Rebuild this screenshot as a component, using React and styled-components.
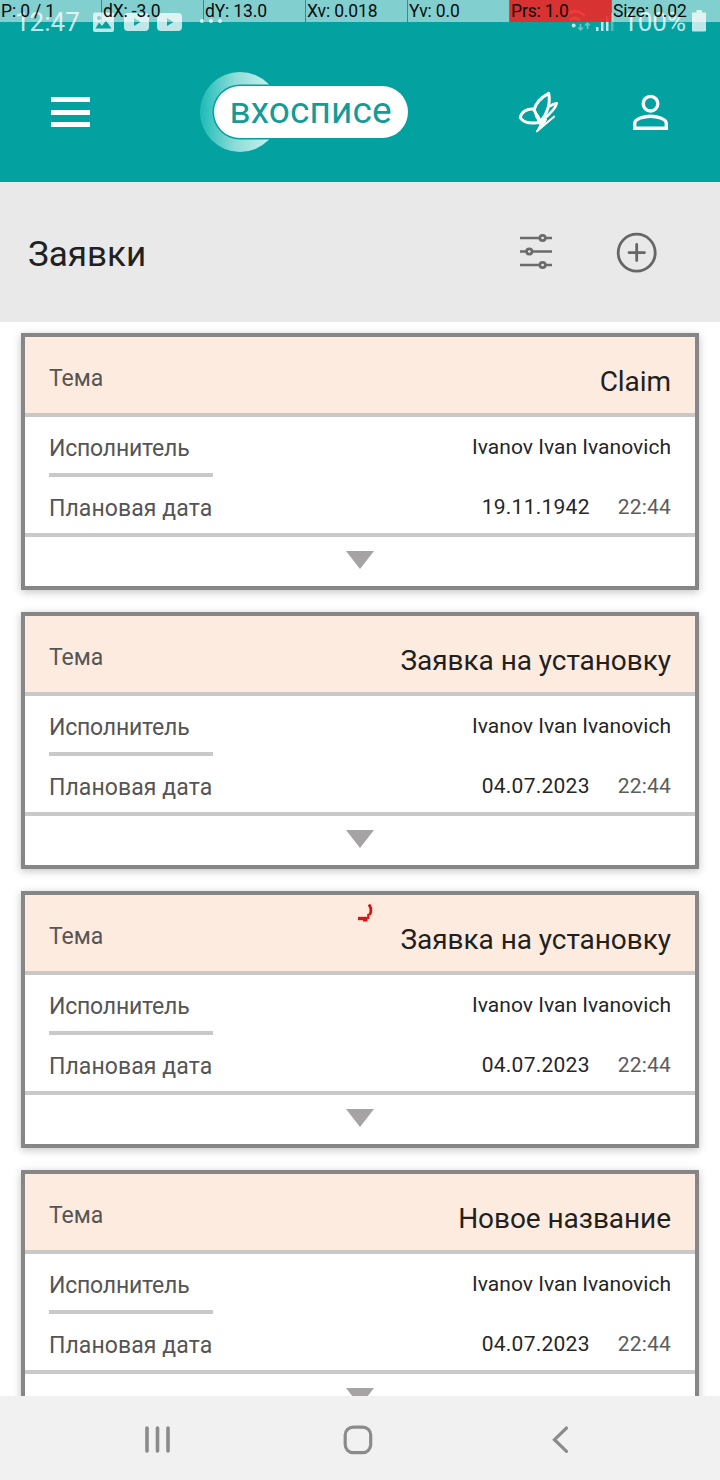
import React from 'react';
import styled, { createGlobalStyle } from 'styled-components';

const GlobalStyle = createGlobalStyle`
  *, *::before, *::after { box-sizing: border-box; }
  body { margin: 0; font-family: Roboto, "Noto Sans", sans-serif; }
  svg { display: block; flex: none; }
`;

const Screen = styled.div`
  position: relative;
  display: flex;
  flex-direction: column;
  width: 720px;
  height: 1480px;
  overflow: hidden;
  background: #fff;
`;

const Header = styled.header`
  flex: none;
  display: flex;
  flex-direction: column;
  height: 182px;
  background: #03a19f;
`;

const StatusBar = styled.div`
  display: flex;
  justify-content: space-between;
  height: 42px;
  padding: 0 13px 0 15px;
  color: rgba(255, 255, 255, 0.75);
`;

const StatusGroup = styled.div`
  display: flex;
  gap: ${(p) => p.$gap}px;
`;

const StatusText = styled.span`
  font-size: 26px;
  line-height: 44px;
  white-space: nowrap;
`;

const AppBar = styled.div`
  display: flex;
  align-items: center;
  height: 140px;
  padding: 0 50px 0 51px;
`;

const MenuButton = styled.button`
  display: flex;
  flex-direction: column;
  gap: 7.5px;
  width: 39px;
  margin-right: 109px;
  padding: 0;
  border: 0;
  background: none;
`;

const MenuLine = styled.span`
  height: 5px;
  background: #fff;
`;

const AppActions = styled.div`
  display: flex;
  align-items: center;
  justify-content: space-between;
  width: 152px;
  margin-left: auto;
`;

const TitleBar = styled.div`
  flex: none;
  display: flex;
  align-items: center;
  height: 140px;
  padding: 0 62px 0 28px;
  background: #e9e9e9;
`;

const PageTitle = styled.h1`
  margin: 5px auto 0 0;
  color: #212121;
  font-size: 35px;
  font-weight: 400;
  line-height: 40px;
`;

const TitleActions = styled.div`
  display: flex;
  align-items: center;
  gap: 63px;
`;

const CardList = styled.main`
  flex: 1;
  min-height: 0;
  display: flex;
  flex-direction: column;
  gap: 22px;
  padding: 11px 21px 0;
  overflow: hidden;
`;

const Card = styled.article`
  flex: none;
  height: 257px;
  border: 4px solid #868686;
  background: #fff;
  box-shadow: 0 2px 8px rgba(0, 0, 0, 0.24);
`;

const CardHead = styled.div`
  display: flex;
  justify-content: space-between;
  align-items: flex-start;
  height: 80px;
  padding: 28px 24px 0;
  border-bottom: 4px solid #c9c8c7;
  background: #feebe0;
`;

const CardRow = styled.div`
  display: flex;
  justify-content: space-between;
  height: 60px;
  padding: 0 24px;
  border-bottom: ${(p) => (p.$divided ? '4px solid #c9c9c9' : '0')};
`;

const LabelCell = styled.div`
  width: 164px;
  padding-top: 18px;
  border-bottom: ${(p) => (p.$underlined ? '4px solid #c9c9c9' : '0')};
`;

const Label = styled.span`
  display: block;
  color: #555;
  font-size: 23px;
  line-height: 28px;
  letter-spacing: ${(p) => p.$tracking || 0}px;
  white-space: nowrap;
`;

const Subject = styled.span`
  color: #221f1d;
  font-size: 28px;
  line-height: 34px;
  letter-spacing: -0.06px;
`;

const Values = styled.div`
  display: flex;
  gap: 28px;
  padding-top: 17px;
`;

const Value = styled.span`
  color: ${(p) => (p.$muted ? '#5c5c5c' : '#262626')};
  font-size: 21px;
  line-height: 26px;
  letter-spacing: ${(p) => p.$tracking || 0}px;
`;

const CardFoot = styled.div`
  display: flex;
  justify-content: center;
  padding-top: 14px;
`;

const NavBar = styled.nav`
  flex: none;
  display: grid;
  grid-template-columns: 199px 209px 18px;
  align-items: center;
  height: 84px;
  padding: 3px 0 0 144px;
  background: #f1f1f1;
`;

const PointerOverlay = styled.div`
  position: absolute;
  top: 0;
  left: 0;
  display: grid;
  grid-template-columns: repeat(6, 101px) 108px;
  gap: 1px;
  width: 720px;
  height: 22px;
`;

const PointerCell = styled.div`
  padding-left: 1px;
  background: ${(p) => (p.$hot ? 'rgba(246, 35, 35, 0.88)' : 'rgba(255, 255, 255, 0.5)')};
  color: #0c0c0c;
  font-size: 17.5px;
  line-height: 22px;
  letter-spacing: -0.15px;
  white-space: nowrap;
`;

const TouchTrail = styled.svg`
  position: absolute;
  top: 902px;
  left: 356px;
`;

function NoticeIcons() {
  return (
    <svg width="132" height="40" viewBox="93 0 132 40" fill="currentColor">
      <path fillRule="evenodd" d="M95 12.500H112a2 2 0 0 1 2 2V30a2 2 0 0 1-2 2H95a2 2 0 0 1-2-2V14.500a2 2 0 0 1 2-2zM95.500 28.500H111.500L106 20.500L102 26L99 22.500zM99 16a2 2 0 1 0 .01 0z" />
      <path fillRule="evenodd" d="M128 13H145a4 4 0 0 1 4 4V27a4 4 0 0 1-4 4H128a4 4 0 0 1-4-4V17a4 4 0 0 1 4-4zM134 18V26L140.500 22z" />
      <path fillRule="evenodd" d="M161 13H178a4 4 0 0 1 4 4V27a4 4 0 0 1-4 4H161a4 4 0 0 1-4-4V17a4 4 0 0 1 4-4zM167 18V26L173.500 22z" />
      <circle cx="202" cy="21" r="2" />
      <circle cx="211" cy="21" r="2" />
      <circle cx="220" cy="21" r="2" />
    </svg>
  );
}

function SignalIcons() {
  return (
    <svg width="51" height="40" viewBox="566 0 51 40" fill="currentColor">
      <g fill="none" stroke="currentColor" strokeWidth="2.600">
        <path d="M566 16Q575 6.500 585 16M570 20.500Q575 15.500 580 20.500" />
      </g>
      <circle cx="573.700" cy="25.500" r="2" />
      <path opacity="0.55" d="M579.700 24H581.300V27.500H583.800L580.500 31L577.200 27.500H579.700zM586.700 29H588.300V25.500H590.800L587.500 22L584.200 25.500H586.700z" />
      <path d="M596 27H598.500V31H596zM601 22H603.500V31H601zM606 16H608.500V31H606z" />
      <path opacity="0.4" d="M611 13H613.500V31H611z" />
    </svg>
  );
}

function BatteryIcon() {
  return (
    <svg width="15" height="40" viewBox="692 0 15 40" fill="currentColor">
      <path d="M696.500 10H702V12.500H705a1 1 0 0 1 1 1V30.500a1 1 0 0 1-1 1H693a1 1 0 0 1-1-1V13.500a1 1 0 0 1 1-1H696.500z" />
    </svg>
  );
}

function Logo() {
  return (
    <svg width="210" height="82" viewBox="199 71 210 82">
      <defs>
        <linearGradient id="moon" gradientUnits="userSpaceOnUse" x1="202" x2="268" y1="112" y2="112">
          <stop offset="0" stopColor="#22bdb8" />
          <stop offset="0.5" stopColor="#8edcd8" />
          <stop offset="1" stopColor="#c4efec" />
        </linearGradient>
      </defs>
      <circle cx="240" cy="112" r="40" fill="url(#moon)" />
      <rect x="212.500" y="84.500" width="198" height="55" rx="27.500" fill="#03a19f" />
      <rect x="214" y="86" width="194" height="52" rx="26" fill="#fff" />
      <text x="229.500" y="122.600" textLength="162" lengthAdjust="spacing" fontFamily="Roboto, sans-serif" fontSize="37" fill="#159b97">вхосписе</text>
    </svg>
  );
}

function ButterflyIcon() {
  return (
    <svg width="42" height="44" viewBox="54 31 126 132" fill="none" stroke="#fff" strokeWidth="9" strokeLinejoin="round" strokeLinecap="round">
      <path d="M146 41C124 53 106 72 102 92C109 98 106 106 112 114L121 126C140 106 153 72 146 41z" />
      <path d="M99 88C82 86 63 98 61 114C68 126 86 132 112 129" />
      <path strokeWidth="8" d="M151 79C158 73 164 72 170 71C168 86 148 104 130 120" />
      <path strokeWidth="6" d="M162 111L130 138L111 155" />
      <path fill="#fff" strokeWidth="3" d="M103 92L114 112L112 129L120 136L109 156L132 136L140 118L126 126L118 112L108 96z" />
    </svg>
  );
}

function PersonIcon() {
  return (
    <svg width="38" height="38" viewBox="632 93 38 38" fill="none" stroke="#fff" strokeWidth="3.400">
      <circle cx="650.500" cy="103.700" r="7.300" />
      <path d="M634.700 128.300V123.500C634.700 118.500 644.500 116.200 650.500 116.200S666.300 118.500 666.300 123.500V128.300z" />
    </svg>
  );
}

function FilterIcon() {
  return (
    <svg width="34" height="36" viewBox="519 234 34 36" fill="#e9e9e9" stroke="#6b6b6b" strokeWidth="2.700">
      <path d="M520 238H552M520 251.500H552M520 265H552" />
      <circle cx="542.600" cy="238" r="2.700" />
      <circle cx="529.300" cy="251.500" r="2.700" />
      <circle cx="542.600" cy="265" r="2.700" />
    </svg>
  );
}

function AddIcon() {
  return (
    <svg width="42" height="42" viewBox="616 231 42 42" fill="none" stroke="#666" strokeWidth="2.800" strokeLinecap="round">
      <circle cx="636.700" cy="252.700" r="18.500" />
      <path d="M629 252.600H644.500M636.700 244.500V260.500" />
    </svg>
  );
}

function ExpandArrow() {
  return (
    <svg width="28" height="18" viewBox="0 0 28 18" fill="#a5a3a3">
      <path d="M0 0H28L14 18z" />
    </svg>
  );
}

const pointerCells = ['P: 0 / 1', 'dX: -3.0', 'dY: 13.0', 'Xv: 0.018', 'Yv: 0.0', 'Prs: 1.0', 'Size: 0.02'];

const claims = [
  { subject: 'Claim', date: '19.11.1942' },
  { subject: 'Заявка на установку', date: '04.07.2023' },
  { subject: 'Заявка на установку', date: '04.07.2023' },
  { subject: 'Новое название', date: '04.07.2023' },
];

function ClaimCard({ subject, date }) {
  return (
    <Card>
      <CardHead>
        <Label>Тема</Label>
        <Subject>{subject}</Subject>
      </CardHead>
      <CardRow>
        <LabelCell $underlined>
          <Label $tracking={-0.2}>Исполнитель</Label>
        </LabelCell>
        <Values>
          <Value $tracking={0.03}>Ivanov Ivan Ivanovich</Value>
        </Values>
      </CardRow>
      <CardRow $divided>
        <LabelCell>
          <Label $tracking={0.08}>Плановая дата</Label>
        </LabelCell>
        <Values>
          <Value $tracking={0.25}>{date}</Value>
          <Value $muted $tracking={0.2}>22:44</Value>
        </Values>
      </CardRow>
      <CardFoot>
        <ExpandArrow />
      </CardFoot>
    </Card>
  );
}

export default function App() {
  return (
    <Screen>
      <GlobalStyle />
      <Header>
        <StatusBar>
          <StatusGroup $gap={13}>
            <StatusText>12:47</StatusText>
            <NoticeIcons />
          </StatusGroup>
          <StatusGroup $gap={6}>
            <SignalIcons />
            <StatusText>100%</StatusText>
            <BatteryIcon />
          </StatusGroup>
        </StatusBar>
        <AppBar>
          <MenuButton aria-label="Меню">
            <MenuLine />
            <MenuLine />
            <MenuLine />
          </MenuButton>
          <Logo />
          <AppActions>
            <ButterflyIcon />
            <PersonIcon />
          </AppActions>
        </AppBar>
      </Header>
      <TitleBar>
        <PageTitle>Заявки</PageTitle>
        <TitleActions>
          <FilterIcon />
          <AddIcon />
        </TitleActions>
      </TitleBar>
      <CardList>
        {claims.map((claim, i) => (
          <ClaimCard key={i} {...claim} />
        ))}
      </CardList>
      <NavBar>
        <svg width="28" height="30" viewBox="144 1425 28 30" stroke="#8b8b8b" strokeWidth="3.600" strokeLinecap="round">
          <path d="M147 1428V1451M157.500 1428V1451M168 1428V1451" />
        </svg>
        <svg width="30" height="30" viewBox="343.500 1424.500 30 30" fill="none" stroke="#8b8b8b" strokeWidth="3.200">
          <rect x="345.700" y="1426.600" width="25.500" height="25.500" rx="8" />
        </svg>
        <svg width="18" height="30" viewBox="552 1425 18 30" fill="none" stroke="#8b8b8b" strokeWidth="3.200" strokeLinecap="round">
          <path d="M566.500 1428L554.500 1439.700L566.500 1451.300" />
        </svg>
      </NavBar>
      <TouchTrail width="20" height="22" viewBox="0 0 20 22" fill="none" stroke="#d91414" strokeWidth="3.400">
        <path strokeWidth="2.800" d="M13 2.500L14.800 6V10L13.500 13" />
        <path d="M2 16.500H11.500" />
        <path strokeWidth="2.200" d="M7 18.500H11.500M12.300 12V17" />
      </TouchTrail>
      <PointerOverlay>
        {pointerCells.map((text) => (
          <PointerCell key={text} $hot={text.startsWith('Prs')}>{text}</PointerCell>
        ))}
      </PointerOverlay>
    </Screen>
  );
}
